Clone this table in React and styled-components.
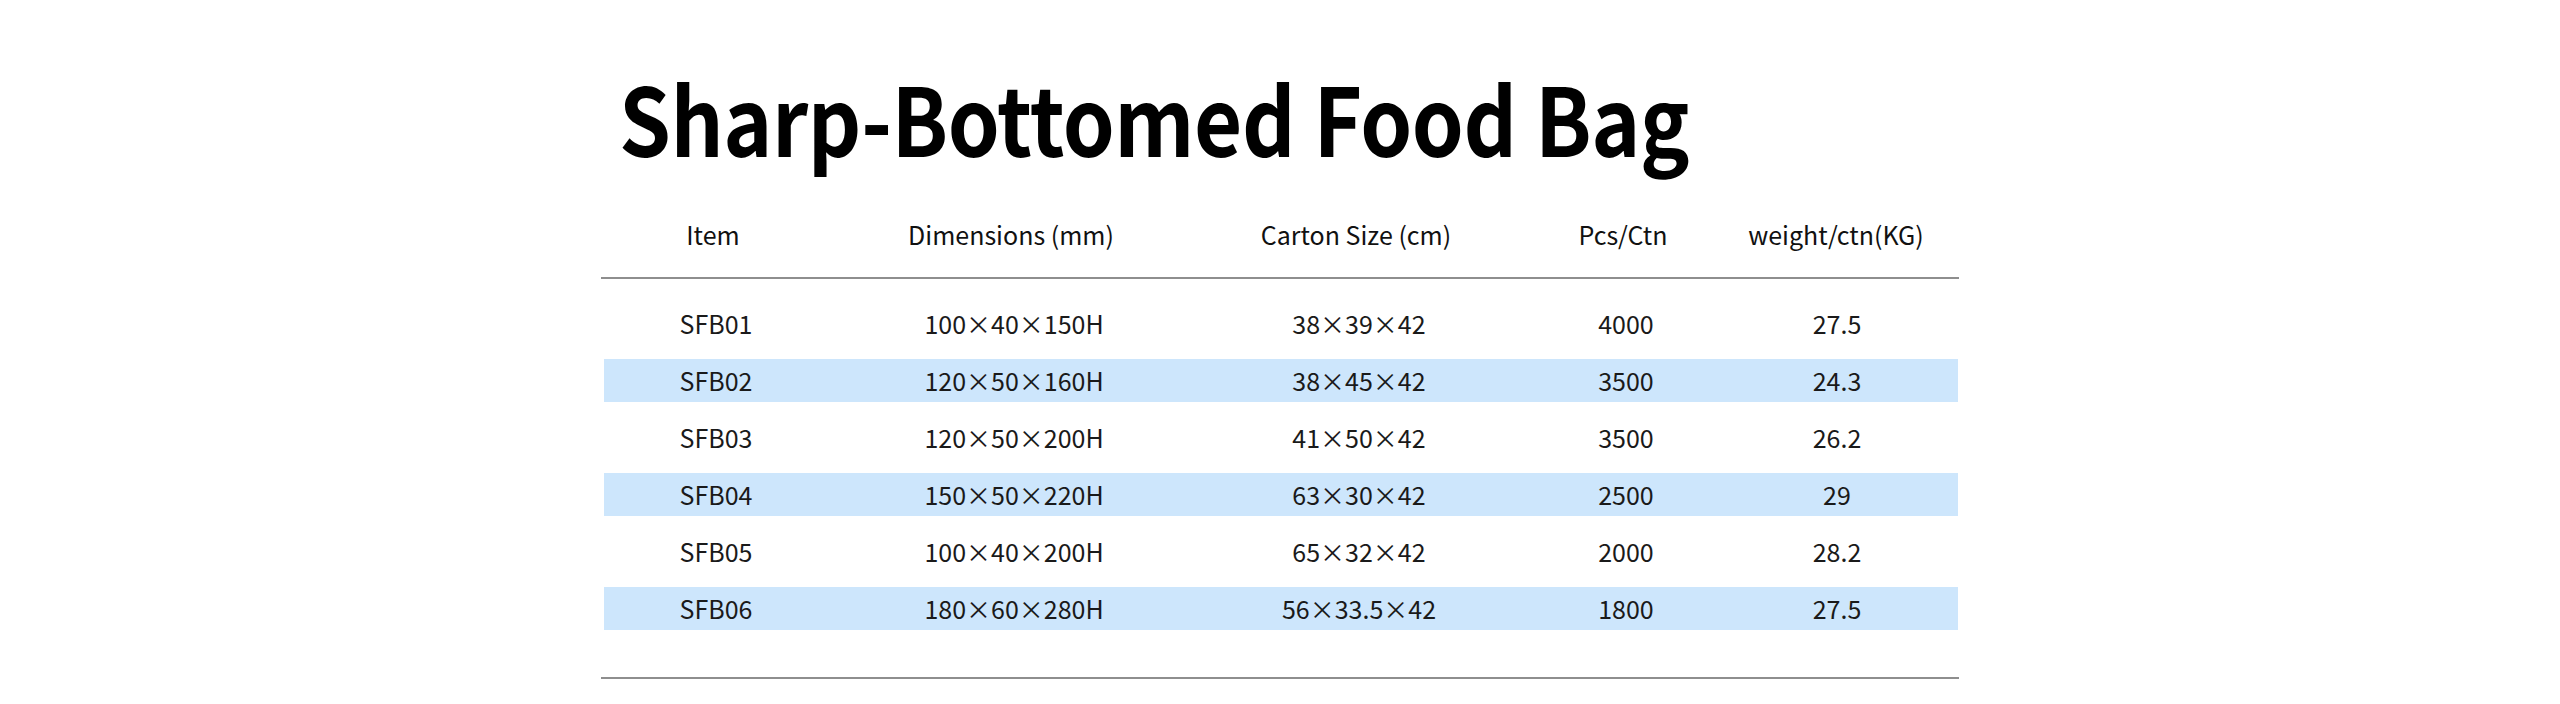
import React from "react";
import styled, { createGlobalStyle } from "styled-components";

const GlobalStyle = createGlobalStyle`
  html, body {
    margin: 0;
    padding: 0;
    background: #ffffff;
  }
  body {
    font-family: "Noto Sans CJK SC", "Noto Sans", sans-serif;
    color: #111111;
  }
`;

const Page = styled.div`
  width: 1358px;
  margin: 0 auto;
  padding-top: 69px;
`;

// the heading in the picture is set a bit narrower than the font draws it
const Title = styled.h1`
  margin: 0 0 0 18px;
  font-size: 94px;
  font-weight: 700;
  line-height: 1;
  color: #000000;
  letter-spacing: -0.5px;
  transform: scaleX(0.885);
  transform-origin: left center;
  white-space: nowrap;
`;

const Table = styled.div`
  display: flex;
  flex-direction: column;
`;

const Cols = styled.div`
  display: grid;
  grid-template-columns: 224px 372px 318px 216px 1fr;
  align-items: center;
`;

const HeadRow = styled(Cols)`
  height: 58px;
  padding-top: 56px;
  border-bottom: 2px solid #8e8e8e;
`;

const HeadCell = styled.div`
  text-align: center;
  font-size: 25px;
  line-height: 30px;
  font-weight: 400;
  color: #111111;
  padding-right: ${(p) => (p.last ? "18px" : "0")};
  padding-bottom: 28px;
`;

const Body = styled.div`
  display: flex;
  flex-direction: column;
  gap: 14px;
  padding: 23px 1px 47px;
  border-bottom: 2px solid #8e8e8e;
`;

const Row = styled(Cols)`
  height: 43px;
  background: ${(p) => (p.striped ? "#cde6fc" : "transparent")};
  margin: 0 0 0 2px;
`;

const Cell = styled.div`
  text-align: center;
  font-size: 25px;
  line-height: 43px;
  color: #1a1a1a;
  padding-right: ${(p) => (p.last ? "18px" : "0")};
`;

const columns = [
  "Item",
  "Dimensions (mm)",
  "Carton Size (cm)",
  "Pcs/Ctn",
  "weight/ctn(KG)",
];

const rows = [
  ["SFB01", "100×40×150H", "38×39×42", "4000", "27.5"],
  ["SFB02", "120×50×160H", "38×45×42", "3500", "24.3"],
  ["SFB03", "120×50×200H", "41×50×42", "3500", "26.2"],
  ["SFB04", "150×50×220H", "63×30×42", "2500", "29"],
  ["SFB05", "100×40×200H", "65×32×42", "2000", "28.2"],
  ["SFB06", "180×60×280H", "56×33.5×42", "1800", "27.5"],
];

export default function App() {
  return (
    <>
      <GlobalStyle />
      <Page>
        <Title>Sharp-Bottomed Food Bag</Title>
        <Table>
          <HeadRow>
            {columns.map((c, i) => (
              <HeadCell key={c} last={i === columns.length - 1}>
                {c}
              </HeadCell>
            ))}
          </HeadRow>
          <Body>
            {rows.map((r, i) => (
              <Row key={r[0]} striped={i % 2 === 1}>
                {r.map((v, j) => (
                  <Cell key={j} last={j === r.length - 1}>
                    {v}
                  </Cell>
                ))}
              </Row>
            ))}
          </Body>
        </Table>
      </Page>
    </>
  );
}
